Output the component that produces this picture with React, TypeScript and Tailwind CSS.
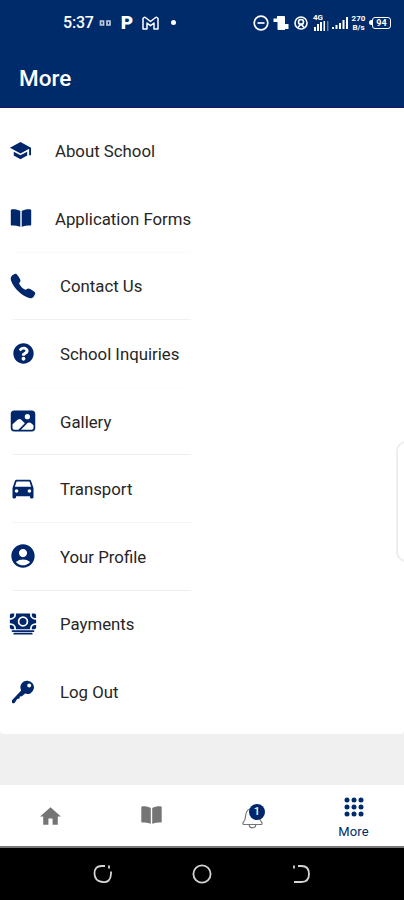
import React from 'react';
import { MdSchool, MdDirectionsCar, MdAccountCircle, MdHome } from 'react-icons/md';
import { FaQuestionCircle } from 'react-icons/fa';
import { IoCall, IoImage, IoCash } from 'react-icons/io5';

function BookIcon({ className = '' }: { className?: string }) {
  return (
    <svg viewBox="0 0 22 18" className={className} fill="currentColor">
      <path d="M.8 1Q.8.4 1.4.4C5 .2 8 .7 10.3 2v15.8C8 16.7 5 16.4 1.4 16.4Q.8 16.4.8 15.8z" />
      <path d="M21.2 1Q21.2.4 20.6.4C17 .2 14 .7 11.7 2v15.8c2.3-1.1 5.3-1.4 8.9-1.4q.6 0 .6-.6z" />
    </svg>
  );
}

function KeyIcon({ className = '' }: { className?: string }) {
  return (
    <svg viewBox="0 0 24 24" className={className} fill="currentColor">
      <path
        fillRule="evenodd"
        d="M16.500 .8a6.600 6.600 0 1 1-2.400 12.800L11 16.300 8.800 16.500 8.500 18.600 6.200 19 3.800 22.800Q2 24 1 22.400V20.300L10.200 10.500A6.600 6.600 0 0 1 16.500 .8zM18.200 3.600a2 2 0 1 0 0 4A2 2 0 0 0 18.200 3.600z"
      />
    </svg>
  );
}

const items = [
  { label: 'About School', icon: <MdSchool className="w-[23px] h-[23px]" />, iconBox: 'pl-[9px] w-[55px]', line: 'border-[#fdfdfd]' },
  { label: 'Application Forms', icon: <BookIcon className="w-[22px] h-[18px]" />, iconBox: 'pl-[10px] w-[55px]', line: 'border-[#fafafa]' },
  { label: 'Contact Us', icon: <IoCall className="w-[28px] h-[28px]" />, iconBox: 'pl-[9px] w-[60px]', line: 'border-[#f0f0f0]' },
  { label: 'School Inquiries', icon: <FaQuestionCircle className="w-[21px] h-[21px]" />, iconBox: 'pl-[13px] w-[60px]', line: 'border-[#fcfcfc]' },
  { label: 'Gallery', icon: <IoImage className="w-[28px] h-[28px]" />, iconBox: 'pl-[9px] w-[60px]', line: 'border-[#f0f0f0]' },
  { label: 'Transport', icon: <MdDirectionsCar className="w-[28px] h-[28px]" />, iconBox: 'pl-[9px] pb-[2px] w-[60px]', line: 'border-[#f4f4f4]' },
  { label: 'Your Profile', icon: <MdAccountCircle className="w-[28px] h-[28px]" />, iconBox: 'pl-[9px] w-[60px]', line: 'border-[#f0f0f0]' },
  { label: 'Payments', icon: <IoCash className="w-[28px] h-[28px]" />, iconBox: 'pl-[9px] w-[60px]', line: 'border-transparent' },
  { label: 'Log Out', icon: <KeyIcon className="w-[24px] h-[24px]" />, iconBox: 'pl-[11px] w-[60px]', line: 'border-transparent' },
];

function StatusBar() {
  return (
    <div className="h-[45px] flex items-center pl-[63px] pr-[13px] text-white">
      <span className="pt-px text-[16px] font-medium tracking-[-0.2px]">5:37</span>
      <svg className="ml-[5px] w-[13px] h-[8px] opacity-75" viewBox="0 0 13 8" fill="none" stroke="white" strokeWidth="1.700">
        <path d="M1.500 2h3v4h-3zM8 2h3v4H8z" />
      </svg>
      <span className="ml-[9px] text-[19px] leading-none font-black">P</span>
      <svg className="ml-[9px] w-[17px] h-[14px]" viewBox="0 0 17 14" fill="none" stroke="white" strokeWidth="1.500" strokeLinejoin="round">
        <path d="M1 2.500Q2 .5 4 2l4.500 3.500L13 2q2-1.500 3 .5V13h-4V7l-3.500 2.700L5 7v6H1z" />
      </svg>
      <span className="ml-[12px] w-[5px] h-[5px] rounded-full bg-white" />
      <div className="ml-auto flex items-center">
        <svg className="w-[16px] h-[16px]" viewBox="0 0 16 16" fill="none" stroke="white" strokeWidth="1.700">
          <circle cx="8" cy="8" r="6.800" />
          <path d="M4.500 8h7" />
        </svg>
        <svg className="ml-[3px] w-[18px] h-[16px]" viewBox="0 0 18 16" fill="white">
          <path d="M5 1h7q1 0 1 1v7h3.500v5H13v1H6.500q-1 0-1-1V7H1.500V3.500H5z" />
        </svg>
        <svg className="ml-[4px] w-[14px] h-[14px]" viewBox="0 0 14 14" fill="none" stroke="white" strokeWidth="1.600">
          <circle cx="7" cy="7" r="6" />
          <circle cx="7" cy="6" r="2.500" />
          <path d="M4 11.500 7 8l3 3.500" />
        </svg>
        <div className="ml-[5px] w-[16px] h-[17px] flex flex-col">
          <span className="text-[8px] leading-[7px] font-bold">4G</span>
          <svg className="w-[16px] h-[10px]" viewBox="0 0 16 10" fill="white">
            <path d="M1 6h2v4H1zM4 3h2v7H4zM7 1h2v9H7zM10.500 0H12v10h-1.500z" />
            <path d="M14 0h1.500v10H14z" opacity=".4" />
          </svg>
        </div>
        <svg className="ml-[3px] w-[16px] h-[12px]" viewBox="0 0 16 12" fill="white">
          <path d="M0 10h2v2H0zM3.500 8h2v4h-2zM7 6h2v6H7zM10.500 3h2v9h-2zM14 0h2v12h-2z" />
        </svg>
        <div className="ml-[3px] w-[15px] text-[8px] leading-[9px] font-bold text-center">
          <div>270</div>
          <div>B/s</div>
        </div>
        <div className="ml-[3px] flex items-center">
          <span className="w-[3px] h-[5px] bg-white rounded-l-sm" />
          <span className="w-[19px] h-[12px] rounded-[3px] border-[1.5px] border-white text-[9px] leading-[10px] font-bold text-center">94</span>
        </div>
      </div>
    </div>
  );
}

function TabBar() {
  return (
    <nav className="h-[61px] bg-white grid grid-cols-4 text-[#757575]">
      <div className="flex justify-center pt-[19px]">
        <MdHome className="w-[25px] h-[25px]" />
      </div>
      <div className="flex justify-center pt-[21px]">
        <BookIcon className="w-[23px] h-[18px]" />
      </div>
      <div className="flex justify-center pt-[21px]">
        <div className="relative w-[21px] h-[23px]">
          <svg className="w-[21px] h-[23px]" viewBox="0 0 21 23" fill="none" stroke="currentColor" strokeWidth="1.200">
            <path d="M1 18.500h19M1 18.500v-1.700C3.500 14.500 3.500 12 3.700 9.500 4 5.500 6.500 2.500 10.500 2.500s6.500 3 6.800 7c.2 2.500.2 5 2.700 7.300v1.700" />
            <path d="M7.200 18.500a3.300 3.300 0 0 0 6.600 0" />
          </svg>
          <span className="absolute left-[7px] top-[-2px] w-[16px] h-[16px] rounded-full bg-[#00266b] text-white text-[11px] leading-[16px] font-medium text-center">1</span>
        </div>
      </div>
      <div className="flex flex-col items-center pt-[12px] text-[#002b6b]">
        <svg className="w-[20px] h-[20px]" viewBox="0 0 20 20" fill="currentColor">
          {[3, 10, 17].map((y) => [3, 10, 17].map((x) => <circle key={`${x}-${y}`} cx={x} cy={y} r="2.500" />))}
        </svg>
        <span className="mt-[6px] text-[13px] leading-[18px] tracking-[0.2px]">More</span>
      </div>
    </nav>
  );
}

function App() {
  return (
    <div className="relative w-full h-[900px] overflow-hidden flex flex-col bg-[#f0f0f0] font-['Roboto',sans-serif]">
      <header className="h-[108px] shrink-0 bg-[#002b6b] border-b border-[#1c1762]">
        <StatusBar />
        <h1 className="pl-[19px] pt-[17px] text-[22.5px] leading-[32px] font-medium text-white">More</h1>
      </header>

      <main className="h-[626px] shrink-0 bg-white rounded-b-[4px] pt-[9.5px]">
        {items.map((item) => (
          <div key={item.label} className="h-[67.6px] flex flex-col">
            <div className="flex-1 flex items-center text-[#00266b]">
              <div className={`shrink-0 ${item.iconBox}`}>{item.icon}</div>
              <span className="pt-px text-[16.8px] leading-[24px] text-[#262626]">{item.label}</span>
            </div>
            <div className={`ml-[13px] w-[178px] border-b ${item.line}`} />
          </div>
        ))}
      </main>

      {/* edge panel handle */}
      <div className="absolute left-[396px] top-[441px] w-[20px] h-[121px] rounded-[14px] border-2 border-[#eeeeee] bg-white" />

      <div className="flex-1" />
      <TabBar />
      <div className="h-[54px] shrink-0 border-t-2 border-[#777777] bg-black flex items-center justify-center gap-[79px]">
        <svg className="w-[20px] h-[20px]" viewBox="0 0 20 20" fill="none" stroke="#d4d4d4" strokeWidth="1.800">
          <path d="M12 2H8.500Q1.500 2 1.500 9.500T9.500 18 18 10V7.500M16 1.500v3" />
        </svg>
        <svg className="w-[20px] h-[20px]" viewBox="0 0 20 20" fill="none" stroke="#d4d4d4" strokeWidth="1.800">
          <circle cx="10" cy="10" r="8.600" />
        </svg>
        <svg className="w-[20px] h-[20px]" viewBox="0 0 20 20" fill="none" stroke="#d4d4d4" strokeWidth="1.800">
          <path d="M7 2h3.500Q18 2 18 10t-7.500 8H3M3 1.500v3" />
        </svg>
      </div>
    </div>
  );
}

export default App;
